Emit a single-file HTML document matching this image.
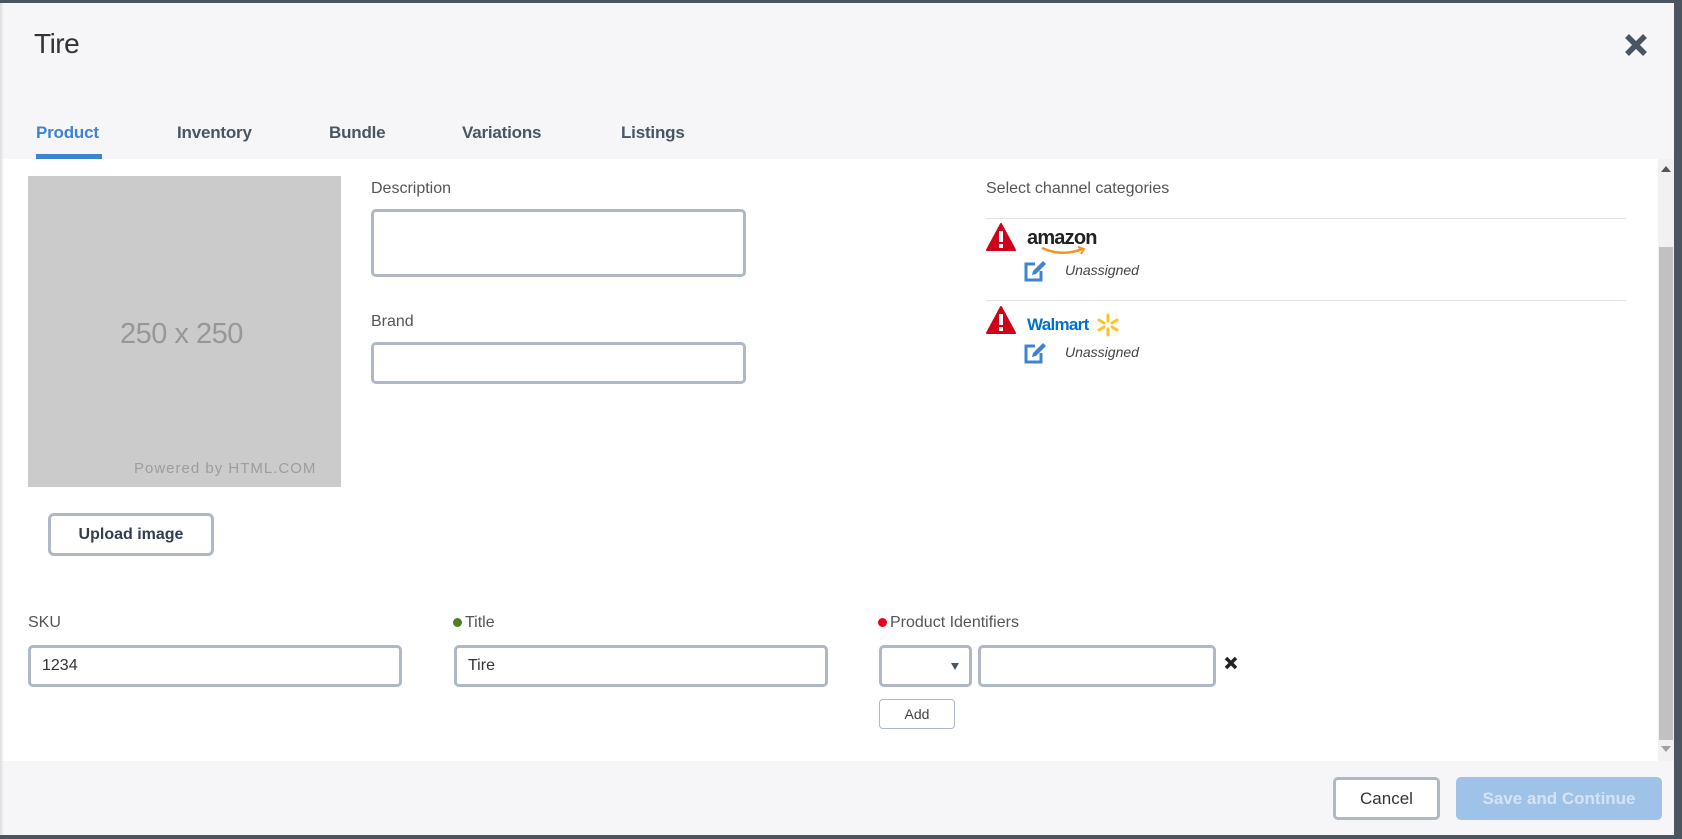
<!DOCTYPE html>
<html><head><style>
*{box-sizing:border-box;margin:0;padding:0}
body{width:1682px;height:839px;overflow:hidden;background:#4a5560;font-family:"Liberation Sans",sans-serif;position:relative}
.a{position:absolute}
#hdr{left:0;top:3px;width:1674px;height:156px;background:#f6f6f9}
#body{left:0;top:159px;width:1674px;height:602px;background:#fff}
#ftr{left:0;top:761px;width:1674px;height:74px;background:#f6f6f9}
.tab{top:123px;font-size:17px;color:#4a5563;font-weight:bold;letter-spacing:-0.2px}
.lbl{font-size:16px;color:#555}
.inp{border:3px solid #b0b8c6;border-radius:5px;background:#fff}
.hr{height:1px;background:#e2e2ea;left:986px;width:640px}
.un{font-size:14px;font-style:italic;color:#444}
</style></head><body>
<div class="a" style="left:0;top:0;width:1682px;height:3px;background:#4a5560"></div>
<div class="a" id="hdr"></div>
<div class="a" id="body"></div>
<div class="a" id="ftr"></div>
<div class="a" style="left:0;top:3px;width:4px;height:832px;background:linear-gradient(90deg,#ddd,rgba(255,255,255,0))"></div>
<div class="a" style="left:34px;top:28px;font-size:28px;color:#333;letter-spacing:-0.5px">Tire</div>
<svg class="a" style="left:1624px;top:33px" width="24" height="24" viewBox="0 0 24 24"><path d="M3 3L21 21M21 3L3 21" stroke="#4a5563" stroke-width="5.5"/></svg>
<div class="a tab" style="left:36px;color:#3d84d2">Product</div>
<div class="a tab" style="left:177px">Inventory</div>
<div class="a tab" style="left:329px">Bundle</div>
<div class="a tab" style="left:462px">Variations</div>
<div class="a tab" style="left:621px">Listings</div>
<div class="a" style="left:36px;top:154px;width:66px;height:5px;background:#3d84d2"></div>
<div class="a" style="left:1658px;top:159px;width:16px;height:602px;background:#f1f1f1"></div>
<div class="a" style="left:1659px;top:247px;width:14px;height:493px;background:#c1c1c1"></div>
<div class="a" style="left:1661px;top:166px;width:0;height:0;border-left:5px solid transparent;border-right:5px solid transparent;border-bottom:6px solid #555"></div>
<div class="a" style="left:1661px;top:746px;width:0;height:0;border-left:5px solid transparent;border-right:5px solid transparent;border-top:6px solid #a0a0a0"></div>
<div class="a" style="left:28px;top:176px;width:313px;height:311px;background:#cbcbcb"></div>
<div class="a" style="left:28px;top:318px;width:307px;text-align:center;font-size:29px;color:#979797;letter-spacing:-0.5px">250 x 250</div>
<div class="a" style="left:134px;top:460px;font-size:15px;color:#9d9d9d;letter-spacing:1px">Powered by HTML.COM</div>
<div class="a inp" style="left:48px;top:513px;width:166px;height:43px;border-radius:6px;text-align:center;line-height:37px;font-size:16px;color:#333d4d;font-weight:bold">Upload image</div>
<div class="a lbl" style="left:371px;top:180px">Description</div>
<div class="a inp" style="left:371px;top:209px;width:375px;height:68px"></div>
<div class="a lbl" style="left:371px;top:313px">Brand</div>
<div class="a inp" style="left:371px;top:342px;width:375px;height:42px"></div>
<div class="a lbl" style="left:986px;top:180px">Select channel categories</div>
<div class="a hr" style="top:218px"></div>
<div class="a hr" style="top:300px"></div>
<svg class="a" style="left:986px;top:223px" width="30" height="28" viewBox="0 0 30 28"><path d="M15 1L29 27H1Z" fill="#d0021b" stroke="#d0021b" stroke-width="2" stroke-linejoin="round"/><rect x="13" y="8" width="4" height="11" fill="#fff"/><rect x="13" y="21" width="4" height="4" fill="#fff"/></svg>
<div class="a" style="left:1027px;top:227px;font-size:20px;font-weight:bold;color:#222;letter-spacing:-0.8px">amazon</div>
<svg class="a" style="left:1040px;top:245px" width="48" height="12" viewBox="0 0 48 12"><path d="M2 3Q22 12 42 4" stroke="#f6931e" stroke-width="2.5" fill="none"/><path d="M38 2L44 4L41 9" stroke="#f6931e" stroke-width="2" fill="none"/></svg>
<svg class="a" style="left:1024px;top:260px" width="23" height="22" viewBox="0 0 23 22"><path d="M11 4H2V20H17V11" stroke="#3d84d2" stroke-width="3" fill="none"/><path d="M8 15L9 11L19 1L22 4L12 14Z" fill="#3d84d2"/></svg>
<div class="a un" style="left:1065px;top:262px">Unassigned</div>
<svg class="a" style="left:986px;top:306px" width="30" height="28" viewBox="0 0 30 28"><path d="M15 1L29 27H1Z" fill="#d0021b" stroke="#d0021b" stroke-width="2" stroke-linejoin="round"/><rect x="13" y="8" width="4" height="11" fill="#fff"/><rect x="13" y="21" width="4" height="4" fill="#fff"/></svg>
<div class="a" style="left:1027px;top:315px;font-size:17px;font-weight:bold;color:#0071ce;letter-spacing:-0.7px">Walmart</div>
<svg class="a" style="left:1096px;top:313px" width="24" height="24" viewBox="0 0 24 24"><g stroke="#ffc220" stroke-width="3" stroke-linecap="round"><path d="M12 2V8M12 16V22M3 7L8 10M16 14L21 17M3 17L8 14M16 10L21 7"/></g></svg>
<svg class="a" style="left:1024px;top:342px" width="23" height="22" viewBox="0 0 23 22"><path d="M11 4H2V20H17V11" stroke="#3d84d2" stroke-width="3" fill="none"/><path d="M8 15L9 11L19 1L22 4L12 14Z" fill="#3d84d2"/></svg>
<div class="a un" style="left:1065px;top:344px">Unassigned</div>
<div class="a lbl" style="left:28px;top:614px">SKU</div>
<div class="a inp" style="left:28px;top:645px;width:374px;height:42px;font-size:16px;color:#333;padding-left:11px;line-height:36px">1234</div>
<div class="a" style="left:453px;top:618px;width:9px;height:9px;border-radius:50%;background:#4a7f26"></div>
<div class="a lbl" style="left:465px;top:614px">Title</div>
<div class="a inp" style="left:454px;top:645px;width:374px;height:42px;font-size:16px;color:#333;padding-left:11px;line-height:36px">Tire</div>
<div class="a" style="left:878px;top:618px;width:9px;height:9px;border-radius:50%;background:#e8001c"></div>
<div class="a lbl" style="left:890px;top:614px">Product Identifiers</div>
<div class="a inp" style="left:879px;top:645px;width:93px;height:42px"></div>
<div class="a" style="left:951px;top:663px;border-left:4px solid transparent;border-right:4px solid transparent;border-top:7px solid #4a5563"></div>
<div class="a inp" style="left:978px;top:645px;width:238px;height:42px"></div>
<svg class="a" style="left:1224px;top:656px" width="14" height="14" viewBox="0 0 14 14"><path d="M2 2L12 12M12 2L2 12" stroke="#222" stroke-width="3.5"/></svg>
<div class="a" style="left:879px;top:699px;width:76px;height:30px;border:1px solid #b0b8c6;border-radius:4px;text-align:center;line-height:28px;font-size:14px;color:#444">Add</div>
<div class="a inp" style="left:1333px;top:777px;width:107px;height:43px;text-align:center;line-height:37px;font-size:17px;color:#333">Cancel</div>
<div class="a" style="left:1456px;top:777px;width:206px;height:43px;border-radius:5px;background:#9fc2e8;text-align:center;line-height:43px;font-size:17px;color:#d4e4f6;font-weight:bold">Save and Continue</div>
</body></html>
